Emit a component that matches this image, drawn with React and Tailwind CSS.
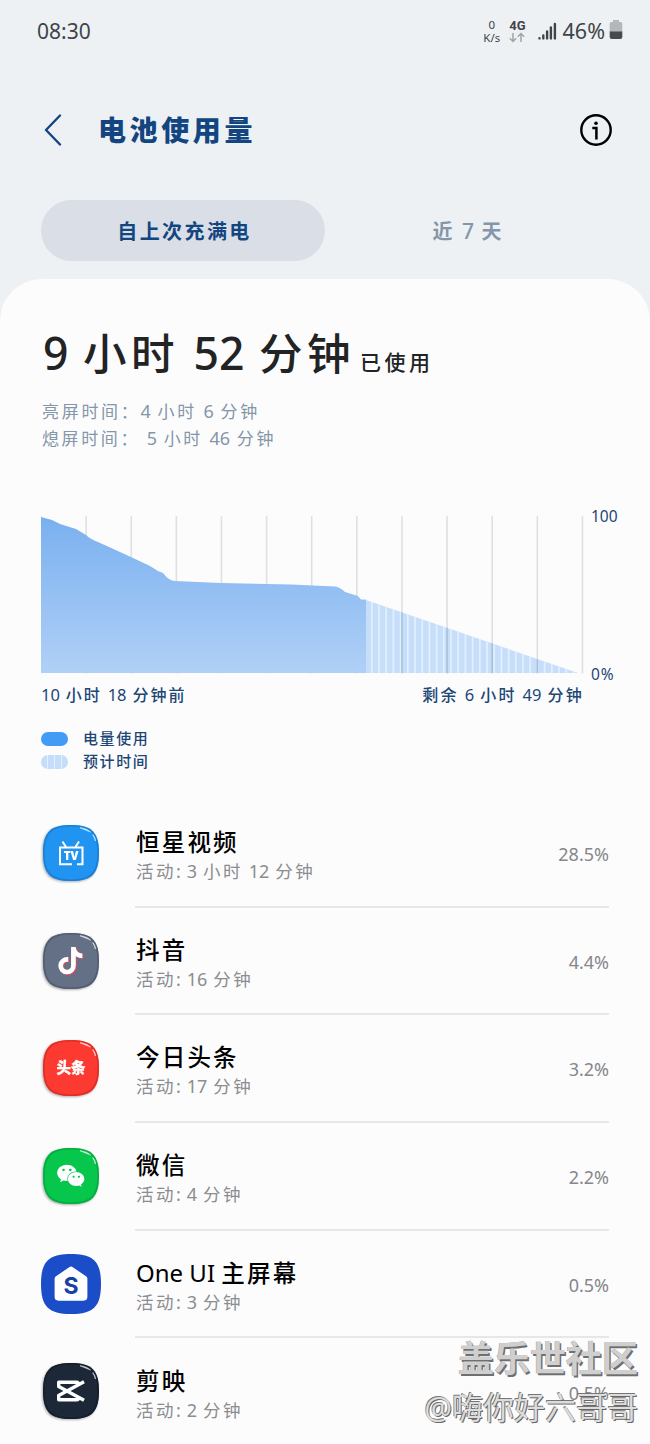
import React from 'react';
import { FaTiktok, FaWeixin } from 'react-icons/fa';

const SQUIRCLE = 'M28 0C49 0 56 7 56 28C56 49 49 56 28 56C7 56 0 49 0 28C0 7 7 0 28 0Z';

const GRID_LINES = Array.from({ length: 13 }, (_, i) => i * 45.12);
const STRIPES = Array.from({ length: 30 }, (_, i) => 330 + i * 7.2);

const APPS = [
	{ id: 'tv', name: '恒星视频', active: '活动: 3 小时 12 分钟', percent: '28.5%' },
	{ id: 'douyin', name: '抖音', active: '活动: 16 分钟', percent: '4.4%' },
	{ id: 'toutiao', name: '今日头条', active: '活动: 17 分钟', percent: '3.2%' },
	{ id: 'wechat', name: '微信', active: '活动: 4 分钟', percent: '2.2%' },
	{ id: 'home', name: 'One UI 主屏幕', active: '活动: 3 分钟', percent: '0.5%' },
	{ id: 'capcut', name: '剪映', active: '活动: 2 分钟', percent: '0.5%' },
];

// Chinese runs get their own size and tracking, latin text keeps the parent's
const Mixed = ({ text, cjk }) => (
	<>
		{text.split(/([\u3000-\u9fff\uff00-\uffef]+)/).filter(Boolean).map((part, i) => (
			/[\u3000-\u9fff]/.test(part)
				? <span key={i} className={cjk}>{part}</span>
				: <span key={i}>{part}</span>
		))}
	</>
);

const Tile = ({ color, edge, children }) => (
	<svg viewBox="0 0 56 56" className="w-14 h-14 overflow-visible drop-shadow-[-1px_1px_1px_rgba(0,0,0,0.3)]">
		<path d={SQUIRCLE} fill={color} />
		<path d="M28 .8C48 .8 55.2 8 55.2 28C55.2 48 48 55.2 28 55.2C8 55.2 .8 48 .8 28C.8 8 8 .8 28 .8Z" fill="none" stroke={edge} strokeWidth="1.6" opacity="0.6" />
		<path d="M37 2.7C42 3.4 45 4.6 47.5 7C44.5 5.8 41 4.5 37 2.7Z" fill="#fff" stroke="#fff" strokeWidth="0.7" opacity="0.8" />
		<path d="M50 10C51.5 12 52 13 52.3 15.5" fill="none" stroke="#fff" strokeWidth="1.2" strokeLinecap="round" opacity="0.8" />
		{children}
	</svg>
);

const AppIcon = ({ id }) => {
	if (id === 'tv') {
		return (
			<Tile color="#2094f0" edge="#1673c4">
				<g fill="none" stroke="#fff" strokeWidth="2">
					<path d="M29 39.3H17V22.5H39.5V39.3H34" />
					<path d="M19.5 16.5L23 22M36 16.5L32.5 22" />
				</g>
				<text x="28.2" y="34.8" textAnchor="middle" fill="#fff" fontSize="11.5" fontWeight="800" fontFamily="Open Sans, sans-serif">TV</text>
			</Tile>
		);
	}
	if (id === 'douyin') {
		return (
			<Tile color="#647085" edge="#475166">
				<FaTiktok x="14.6" y="14.6" size="27.5" color="#e8455b" />
				<FaTiktok x="13.6" y="14" size="27.5" color="#fff" />
			</Tile>
		);
	}
	if (id === 'toutiao') {
		return (
			<Tile color="#fc3a32" edge="#cb2722">
				<text x="28" y="33" textAnchor="middle" fill="#fff" stroke="#fff" strokeWidth="0.3" fontSize="14.5" fontWeight="900" fontFamily="Noto Sans CJK SC, sans-serif">头条</text>
			</Tile>
		);
	}
	if (id === 'wechat') {
		return (
			<Tile color="#06c64c" edge="#079b3c">
				<FaWeixin x="13.5" y="13.5" size="28.5" color="#fff" />
			</Tile>
		);
	}
	if (id === 'home') {
		return (
			<svg viewBox="0 0 56 56" className="w-[60px] h-[60px]">
				<path d={SQUIRCLE} fill="#1c4dc8" />
				<path d="M26.3 12.4Q28 11 29.7 12.4L42 20.7Q43.3 21.6 43.3 23V40Q43.3 43.6 39.7 43.6H16.3Q12.7 43.6 12.7 40V23Q12.7 21.6 14 20.7Z" fill="#fff" />
				<text x="28" y="37.2" textAnchor="middle" fill="#1742a4" fontSize="21.5" fontWeight="700" fontFamily="Inter, sans-serif">S</text>
			</svg>
		);
	}
	return (
		<Tile color="#1c2838" edge="#101824">
			<g fill="none" stroke="#fff" strokeWidth="3.4" strokeLinejoin="round">
				<path d="M41 18.7L15.7 32.5V36.8H33.7Q35.6 36.8 35.6 34" />
				<path d="M41 37.3L15.7 23.5V19.2H33.7Q35.6 19.2 35.6 22" />
			</g>
		</Tile>
	);
};

const StatusBar = () => (
	<div className="flex h-[62px] items-center justify-between pl-[37px] pr-[27px] text-[#414447]">
		<span className="text-[21px] leading-none">08:30</span>
		<div className="flex items-center">
			<div className="mr-[9px] flex flex-col items-center text-[11.5px] leading-[13px]">
				<span>0</span>
				<span>K/s</span>
			</div>
			<div className="mr-3 flex flex-col items-center text-[13px] font-bold leading-[13px]">
				<span className="font-[Roboto]">4G</span>
				<svg viewBox="0 0 16 11" className="h-[11px] w-4" fill="none" stroke="#a1a4a7" strokeWidth="1.5">
					<path d="M4 1V9.5M.8 6.3L4 9.5L7.2 6.3" />
					<path d="M12 10V1.5M8.8 4.7L12 1.5L15.2 4.7" />
				</svg>
			</div>
			<svg viewBox="0 0 19 18" className="mr-[6px] h-[18px] w-[19px]" stroke="#414447" strokeWidth="2.4" strokeLinecap="round">
				<path d="M1.5 16.3V16.4M5.3 13.5V16.4M9.1 9.5V16.4M12.9 5.5V16.4M16.9 2V16.4" />
			</svg>
			<span className="text-[21.5px] leading-none">46%</span>
			<svg viewBox="0 0 14 19" className="ml-1 mb-[3px] h-[19px] w-[14px]">
				<path d="M4 0H10V2H11.5Q13.3 2 13.3 4V12H.7V4Q.7 2 2.5 2H4Z" fill="#b4b7ba" />
				<path d="M.7 11.5H13.3V17Q13.3 19 11.3 19H2.7Q.7 19 .7 17Z" fill="#47494b" />
			</svg>
		</div>
	</div>
);

const Chart = () => (
	<svg viewBox="0 0 543 158" className="h-[158px] w-[543px] shrink-0">
		<defs>
			<linearGradient id="used" x1="0" y1="0" x2="0" y2="1">
				<stop offset="0" stopColor="#7ab0f0" />
				<stop offset="1" stopColor="#b0d0f6" />
			</linearGradient>
			<clipPath id="remaining">
				<path d="M325 84L537 157H325Z" />
			</clipPath>
		</defs>
		{GRID_LINES.map((x) => (
			<path key={x} d={`M${x} 0V157.5`} stroke="#dfe0e2" strokeWidth="1.6" />
		))}
		<path
			d="M0 1L11 4L19 8L35 13L45 19Q49 23 57 26L90 41L109 50L117 55L122 57Q128 65 134 65L180 67L250 68.5L294 70.5Q299 71 304 76L317 80L320 83.5H325V157H0Z"
			fill="url(#used)"
		/>
		<g clipPath="url(#remaining)">
			<rect x="325" y="80" width="217" height="78" fill="#bfdaf9" fillOpacity="0.88" />
			{STRIPES.map((x) => (
				<rect key={x} x={x} y="80" width="1.7" height="78" fill="#e2f0fe" />
			))}
			{GRID_LINES.map((x) => (
				<path key={x} d={`M${x} 0V157.5`} stroke="#a8c2de" strokeWidth="1.6" />
			))}
		</g>
	</svg>
);

const AppRow = ({ app, last }) => (
	<div className="flex h-[107.7px]">
		<div className="flex h-[107.7px] w-[60px] items-center justify-center pb-[2px]">
			<AppIcon id={app.id} />
		</div>
		<div className={last ? 'ml-[34px] flex w-[474px] items-center justify-between' : 'ml-[34px] flex w-[474px] items-center justify-between border-b-2 border-[#e6e7e8]'}>
			<div className="pl-px pt-[5px]">
				<div className="h-[31px] whitespace-nowrap text-[24px] leading-[31px] text-black">
					<Mixed text={app.name} cjk="font-medium text-[23.5px] tracking-[2.2px]" />
				</div>
				<div className="h-7 whitespace-nowrap text-[18px] leading-7 text-[#8b8d8f] [word-spacing:1.2px]">
					<Mixed text={app.active} cjk="text-[17.5px] tracking-[2.5px]" />
				</div>
			</div>
			<span className="pt-[3px] text-[18px] text-[#85878a]">{app.percent}</span>
		</div>
	</div>
);

const App = () => (
	<div className="relative h-[1444px] w-[650px] overflow-hidden bg-[#edf1f4] font-['Noto_Sans','Noto_Sans_CJK_SC',sans-serif]">
		<StatusBar />

		<div className="flex h-[138px] items-center pl-[44px] pr-[38px] pb-[3px]">
			<svg viewBox="0 0 18 32" className="h-8 w-[18px]" fill="none" stroke="#134680" strokeWidth="2.4" strokeLinecap="round" strokeLinejoin="round">
				<path d="M16 1.5L2 16L16 30.5" />
			</svg>
			<h1 className="ml-9 text-[28px] font-black leading-none tracking-[3.6px] text-[#134680]">电池使用量</h1>
			<svg viewBox="0 0 32 32" className="ml-auto h-8 w-8" fill="none" stroke="#000">
				<circle cx="16" cy="16" r="14.7" strokeWidth="2.4" />
				<path d="M12.3 14H16.4V25.5" strokeWidth="2.5" />
				<circle cx="16" cy="9.3" r="1.8" fill="#000" stroke="none" />
			</svg>
		</div>

		<div className="flex px-[41px]">
			<div className="flex h-[61px] w-[284px] items-center justify-center rounded-full bg-[#d9dee7] pt-[2px] pl-[3px] text-[20px] font-bold tracking-[2.4px] text-[#134680]">
				自上次充满电
			</div>
			<div className="flex h-[61px] w-[284px] items-center justify-center pt-[2px] pl-[2px] text-[21px] font-medium text-[#8496aa] [word-spacing:2px]">
				<span className="whitespace-nowrap"><Mixed text="近 7 天" cjk="text-[20px] font-bold tracking-[2px]" /></span>
			</div>
		</div>

		<div className="mt-[18px] h-[1165px] rounded-t-[42px] bg-[#fcfcfd] px-[41px] pt-[44px]">
			<div className="h-[60px] whitespace-nowrap pl-[2px] text-[44.5px] font-medium leading-[60px] text-[#222325] [word-spacing:3px]">
				<Mixed text="9 小时 52 分钟" cjk="text-[43.5px] tracking-[4.5px]" />
				<span className="ml-[5px] text-[21px] tracking-[3.4px]">已使用</span>
			</div>
			<div className="mt-[15px] pl-px text-[18px] leading-[27px] text-[#8496a8] [word-spacing:2px]">
				<div className="h-[27px] whitespace-pre"><Mixed text="亮屏时间：4 小时 6 分钟" cjk="text-[17px] tracking-[2.7px]" /></div>
				<div className="h-[27px] whitespace-pre"><Mixed text="熄屏时间： 5 小时 46 分钟" cjk="text-[17px] tracking-[2.6px]" /></div>
			</div>

			<div className="mt-[64px] -mr-8 flex text-[#1c4675]">
				<Chart />
				<div className="-my-3 ml-[7px] flex flex-col justify-between text-[15.5px] leading-6">
					<span>100</span>
					<span className="tracking-[1px]">0%</span>
				</div>
			</div>
			<div className="mt-[9px] flex h-6 w-[543px] justify-between whitespace-nowrap text-[16.5px] leading-6 text-[#1c4675] [word-spacing:1.6px]">
				<span><Mixed text="10 小时 18 分钟前" cjk="text-[16px] font-medium tracking-[2px]" /></span>
				<span><Mixed text="剩余 6 小时 49 分钟" cjk="text-[16px] font-medium tracking-[2.3px]" /></span>
			</div>

			<div className="mt-[20px] flex flex-col text-[15px] font-medium leading-[23px] tracking-[1.6px] text-[#1c4675]">
				<div className="flex h-[23px] items-center">
					<span className="mr-[15px] h-[14px] w-[27px] rounded-full bg-[#429cf5]" />
					电量使用
				</div>
				<div className="flex h-[23px] items-center">
					<span className="mr-[15px] flex h-[14px] w-[27px] justify-evenly rounded-full bg-[#c5ddf8]">
						<i className="w-[1.5px] bg-[#e4f1fe]" />
						<i className="w-[1.5px] bg-[#e4f1fe]" />
						<i className="w-[1.5px] bg-[#e4f1fe]" />
					</span>
					预计时间
				</div>
			</div>

			<div className="mt-[27px]">
				{APPS.map((app, i) => (
					<AppRow key={app.id} app={app} last={i === APPS.length - 1} />
				))}
			</div>
		</div>

		<div className="absolute bottom-[13px] right-3 flex flex-col items-end whitespace-nowrap">
			<span className="text-[36px] font-bold leading-[48px] text-[#cfcfcf] [text-shadow:1.5px_1.5px_0_#6f6f6f,-0.5px_-0.5px_0_#aaa]">盖乐世社区</span>
			<span className="text-[31px] leading-[48px] text-[#dcdcdc] [text-shadow:1px_1px_0_#666,-0.7px_-0.7px_0_#777]">@嗨你好六哥哥</span>
		</div>
	</div>
);

export default App;
